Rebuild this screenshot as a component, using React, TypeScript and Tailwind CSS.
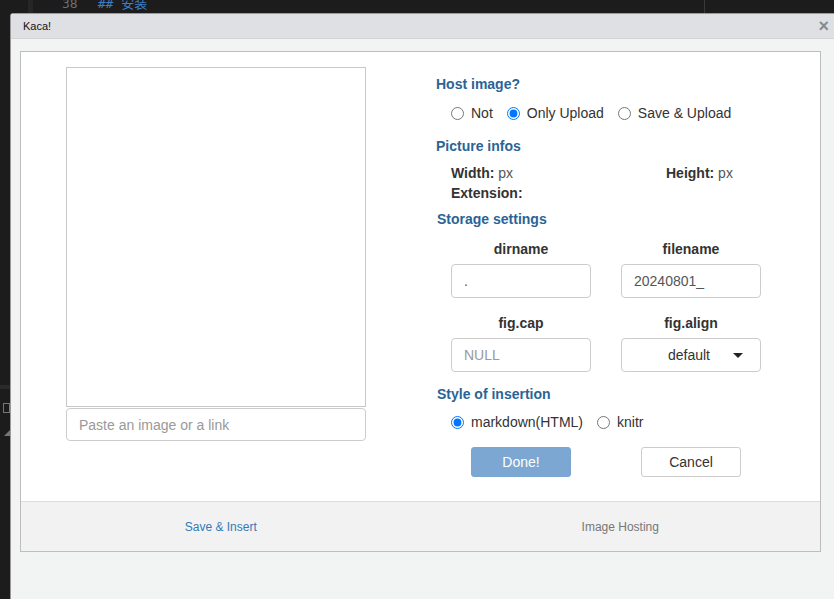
import React from 'react';

const sans = { fontFamily: '"Liberation Sans", Arial, sans-serif' };

const Heading = ({ children, className = '' }: { children: React.ReactNode; className?: string }) => (
  <div className={`text-[14px] leading-[20px] font-bold text-[#2a6496] ${className}`}>{children}</div>
);

const Radio = ({ label, checked, name }: { label: string; checked?: boolean; name: string }) => (
  <label className="flex items-center gap-[7px] text-[14px] leading-[20px] text-[#333]">
    <input type="radio" name={name} defaultChecked={checked} className="m-0 h-[13px] w-[13px]" />
    <span>{label}</span>
  </label>
);

export default function App() {
  return (
    <div className="relative h-[599px] w-[834px] overflow-hidden bg-[#1c1c1c]" style={sans}>
      {/* editor behind the dialog */}
      <div className="absolute left-[28px] top-0 h-[13px] w-[5px] bg-[#262626]" />
      <div className="absolute left-[704px] top-0 h-[13px] w-px bg-[#3a3a3a]" />
      <div
        className="flex -mt-[5px] gap-[20px] pl-[62px] text-[13px] leading-[18px]"
        style={{ fontFamily: '"DejaVu Sans Mono", "Noto Sans CJK SC", monospace' }}
      >
        <span className="text-[#6e6e6e]">38</span>
        <span className="text-[#3f7fc4]">## 安装</span>
      </div>
      <div className="absolute left-0 top-[385px] h-[4px] w-[10px] bg-[#2a2a2a]" />
      <div className="absolute left-[3px] top-[403px] h-[10px] w-[7px] border border-[#777]" />
      <div className="absolute left-[4px] top-[430px] h-0 w-0 border-b-[6px] border-l-[6px] border-b-[#777] border-l-transparent" />

      {/* dialog */}
      <div className="absolute left-[10px] top-[13px] flex h-[587px] w-[825px] flex-col rounded-tl-[3px] border border-[#9a9a9a] bg-[#f2f3f3]">
        <div className="flex h-[25px] shrink-0 items-center justify-between border-b border-[#d2d3d6] bg-[#dfe0e4] pl-[12px] pr-[5px]">
          <span className="text-[11px] text-[#111]">Kaca!</span>
          <span className="text-[18px] font-bold leading-none text-[#8a8a8a]">×</span>
        </div>

        <div className="ml-[9px] mr-[13px] mt-[12px] flex h-[501px] flex-col border border-[#bdbdbd] bg-white">
          <div className="flex h-[449px]">
            {/* left: preview */}
            <div className="flex w-[400px] flex-col pl-[45px] pt-[15px]">
              <div className="h-[340px] w-[300px] border border-[#c8c8c8]" />
              <input
                placeholder="Paste an image or a link"
                className="mt-px h-[33px] w-[300px] rounded-[4px] border border-[#cccccc] px-[12px] text-[14px] text-[#555] outline-none placeholder:text-[#999]"
              />
            </div>

            {/* right: settings */}
            <div className="flex flex-col pl-[15px]">
              <Heading className="mt-[22px]">Host image?</Heading>
              <div className="ml-[15px] mt-[9px] flex gap-[14px]">
                <Radio name="host" label="Not" />
                <Radio name="host" label="Only Upload" checked />
                <Radio name="host" label="Save & Upload" />
              </div>

              <Heading className="mt-[13px]">Picture infos</Heading>
              <div className="ml-[15px] mt-[7px] grid w-[300px] grid-cols-[215px_1fr] text-[14px] leading-[20px] text-[#333]">
                <div>
                  <b>Width:</b> <span className="text-[#555]">px</span>
                </div>
                <div>
                  <b>Height:</b> <span className="text-[#555]">px</span>
                </div>
                <div>
                  <b>Extension:</b>
                </div>
              </div>

              <Heading className="ml-px mt-[6px]">Storage settings</Heading>
              <div className="ml-[15px] mt-[10px] grid grid-cols-[140px_140px] gap-x-[30px] text-[14px] text-[#333]">
                <div className="text-center font-bold leading-[20px]">dirname</div>
                <div className="text-center font-bold leading-[20px]">filename</div>
                <input
                  defaultValue="."
                  className="mt-[5px] h-[34px] rounded-[4px] border border-[#cccccc] px-[12px] text-[14px] text-[#555] outline-none"
                />
                <input
                  defaultValue="20240801_"
                  className="mt-[5px] h-[34px] rounded-[4px] border border-[#cccccc] px-[12px] text-[14px] text-[#555] outline-none"
                />
                <div className="mt-[15px] text-center font-bold leading-[20px]">fig.cap</div>
                <div className="mt-[15px] text-center font-bold leading-[20px]">fig.align</div>
                <input
                  placeholder="NULL"
                  className="mt-[5px] h-[34px] rounded-[4px] border border-[#cccccc] px-[12px] text-[14px] text-[#555] outline-none placeholder:text-[#999]"
                />
                <div className="relative mt-[5px] flex h-[34px] items-center justify-center rounded-[4px] border border-[#cccccc] pr-[4px] text-[14px] text-[#333]">
                  <span>default</span>
                  <span className="absolute right-[17px] top-[14px] h-0 w-0 border-x-[5px] border-t-[5px] border-x-transparent border-t-[#222]" />
                </div>
              </div>

              <Heading className="ml-px mt-[12px]">Style of insertion</Heading>
              <div className="ml-[15px] mt-[8px] flex gap-[14px]">
                <Radio name="style" label="markdown(HTML)" checked />
                <Radio name="style" label="knitr" />
              </div>

              <div className="ml-[35px] mt-[15px] flex gap-[70px]">
                <button className="h-[30px] w-[100px] rounded-[3px] border border-[#7aa7d2] bg-[#7ba7d2] text-[14px] text-white">
                  Done!
                </button>
                <button className="h-[30px] w-[100px] rounded-[3px] border border-[#cccccc] bg-white text-[14px] text-[#333]">
                  Cancel
                </button>
              </div>
            </div>
          </div>

          {/* footer tabs */}
          <div className="grid h-[50px] grid-cols-2 items-center border-t border-[#dddddd] bg-[#f2f2f2] text-[12px]">
            <div className="text-center text-[#337ab7]">Save &amp; Insert</div>
            <div className="text-center text-[#777]">Image Hosting</div>
          </div>
        </div>
      </div>
    </div>
  );
}
